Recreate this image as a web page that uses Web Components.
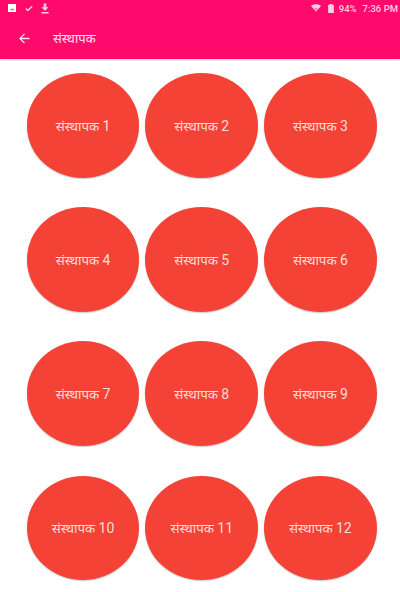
<!DOCTYPE html>
<html lang="hi">
<head>
<meta charset="utf-8">
<title>संस्थापक</title>
<style>
html,body{margin:0;padding:0;background:#fff;}
body{width:400px;height:592px;overflow:hidden;font-family:Roboto,"Noto Sans","Noto Sans Devanagari","Lohit Devanagari",sans-serif;}
</style>
</head>
<body>
<app-bar title="संस्थापक"></app-bar>
<circle-grid>
<circle-item>संस्थापक <span>1</span></circle-item>
<circle-item>संस्थापक <span>2</span></circle-item>
<circle-item>संस्थापक <span>3</span></circle-item>
<circle-item>संस्थापक <span>4</span></circle-item>
<circle-item>संस्थापक <span>5</span></circle-item>
<circle-item>संस्थापक <span>6</span></circle-item>
<circle-item>संस्थापक <span>7</span></circle-item>
<circle-item>संस्थापक <span>8</span></circle-item>
<circle-item>संस्थापक <span>9</span></circle-item>
<circle-item>संस्थापक <span>10</span></circle-item>
<circle-item>संस्थापक <span>11</span></circle-item>
<circle-item>संस्थापक <span>12</span></circle-item>
</circle-grid>
<script>
class AppBar extends HTMLElement{
constructor(){
super();
this.attachShadow({mode:"open"});
this.shadowRoot.innerHTML=`
<style>
:host{display:block;background:#fe0a6d;color:#fff;height:59px;box-shadow:0 1px 2px rgba(0,0,0,.2);position:relative;}
.status{height:16px;display:flex;align-items:center;padding:0 2px 4px 8px;font:500 9.5px Roboto,sans-serif;color:#fbd0e2;}
.left{display:flex;align-items:center;flex:1;}
.right{display:flex;align-items:center;}
.bar{height:39px;display:flex;align-items:center;padding-left:19px;}
.title{margin-left:23px;font-size:13px;color:#fde3ee;margin-top:-3px;}
svg{display:block;}
.back{margin-top:-3px;}
</style>
<div class="status">
<div class="left">
<svg width="8" height="8" viewBox="0 0 9 9"><path fill="#fff" d="M0 0h9v9H0z"/><path fill="#e0609a" d="M2 7l1.400-2 1 1.200L5.600 4.500 7 7z"/></svg>
<svg style="margin-left:9px" width="8" height="7" viewBox="0 0 10 9"><path fill="none" stroke="#fbd0e2" stroke-width="2" d="M1 4.500l2.600 2.500L9 1.600"/></svg>
<svg style="margin-left:8px" width="8" height="11" viewBox="0 0 9 11"><path fill="#fbd0e2" d="M3 0h3v4h2.500L4.500 8 .5 4H3zM.5 9.500h8V11h-8z"/></svg>
</div>
<div class="right">
<svg width="10" height="8" viewBox="0 0 13 10"><path fill="#fbd0e2" d="M0 2.500C3.500-.8 9.500-.8 13 2.500L6.500 10z"/><path fill="#fe7fb0" d="M3.500 5.500c1.800-1.300 4.200-1.300 6 0L6.500 9z"/></svg>
<svg style="margin-left:7px" width="6" height="9" viewBox="0 0 7 11"><path fill="#fbd0e2" d="M2 0h3v1h2v10H0V1h2z"/></svg>
<span style="margin-left:5px">94%</span>
<span style="margin-left:6px">7:36 PM</span>
</div>
</div>
<div class="bar">
<svg class="back" width="11" height="11" viewBox="0 0 12 12"><path fill="none" stroke="#fde3ee" stroke-width="1.400" d="M11.500 6H1.500M6 1L1 6l5 5"/></svg>
<span class="title"></span>
</div>`;
}
connectedCallback(){
this.shadowRoot.querySelector(".title").textContent=this.getAttribute("title");
}
}
customElements.define("app-bar",AppBar);

class CircleGrid extends HTMLElement{
constructor(){
super();
this.attachShadow({mode:"open"});
this.shadowRoot.innerHTML=`
<style>
:host{display:grid;grid-template-columns:repeat(3,112.700px);grid-auto-rows:104.500px;column-gap:6px;row-gap:29.600px;padding:14.300px 0 0 26.700px;}
</style>
<slot></slot>`;
}
}
customElements.define("circle-grid",CircleGrid);

class CircleItem extends HTMLElement{
constructor(){
super();
this.attachShadow({mode:"open"});
this.shadowRoot.innerHTML=`
<style>
:host{display:flex;align-items:center;justify-content:center;background:#f44336;border-radius:50%;color:#fbdcd7;font-size:13.300px;box-shadow:0 1px 1.500px rgba(0,0,0,.22);white-space:nowrap;}
::slotted(span){font-size:14px;}
</style>
<div><slot></slot></div>`;
}
}
customElements.define("circle-item",CircleItem);
</script>
</body>
</html>
